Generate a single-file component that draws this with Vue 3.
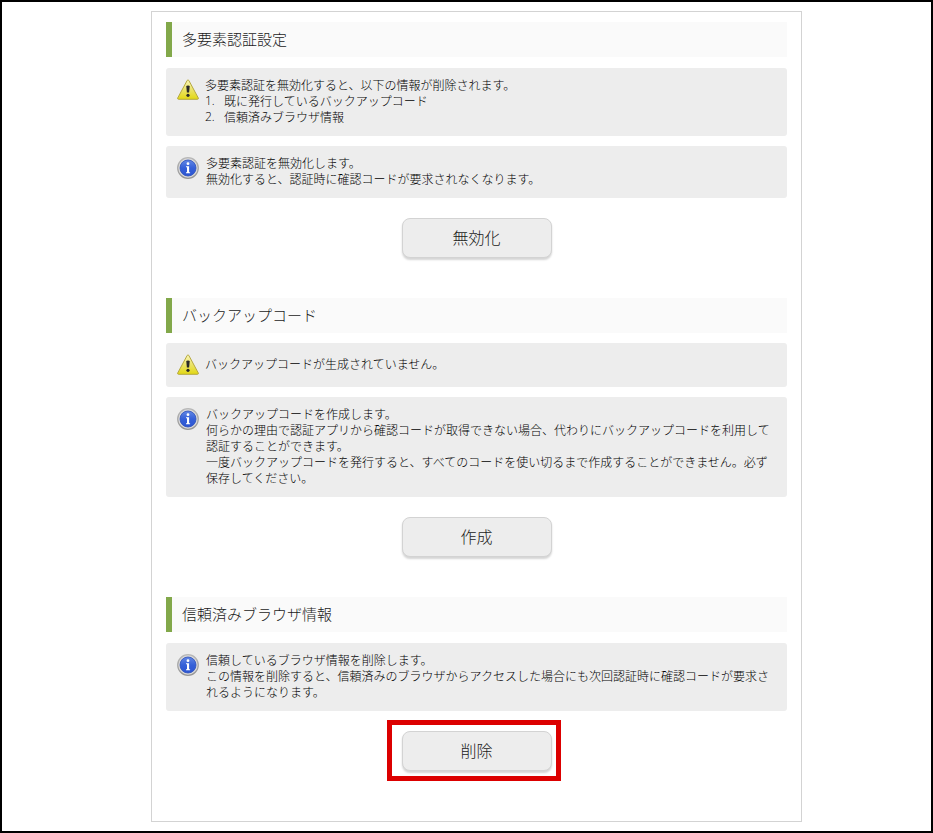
<script setup>
const sections = [
  {
    title: '多要素認証設定',
    boxes: [
      {
        kind: 'warn',
        lines: ['多要素認証を無効化すると、以下の情報が削除されます。'],
        items: ['既に発行しているバックアップコード', '信頼済みブラウザ情報'],
      },
      { kind: 'info', lines: ['多要素認証を無効化します。', '無効化すると、認証時に確認コードが要求されなくなります。'] },
    ],
    action: '無効化',
  },
  {
    title: 'バックアップコード',
    tight: true,
    boxes: [
      { kind: 'warn', single: true, lines: ['バックアップコードが生成されていません。'] },
      {
        kind: 'info',
        lines: [
          'バックアップコードを作成します。',
          '何らかの理由で認証アプリから確認コードが取得できない場合、代わりにバックアップコードを利用して認証することができます。',
          '一度バックアップコードを発行すると、すべてのコードを使い切るまで作成することができません。必ず保存してください。',
        ],
      },
    ],
    action: '作成',
  },
  {
    title: '信頼済みブラウザ情報',
    boxes: [
      {
        kind: 'info',
        lines: [
          '信頼しているブラウザ情報を削除します。',
          'この情報を削除すると、信頼済みのブラウザからアクセスした場合にも次回認証時に確認コードが要求されるようになります。',
        ],
      },
    ],
    action: '削除',
    marked: true,
  },
]
</script>

<template>
  <div class="page">
    <svg class="defs" aria-hidden="true">
      <defs>
        <linearGradient id="warnFill" x1="0" y1="0" x2="0" y2="1">
          <stop offset="0" stop-color="#fbf7b8" />
          <stop offset="0.5" stop-color="#ebe36a" />
          <stop offset="1" stop-color="#e2d812" />
        </linearGradient>
        <linearGradient id="ringFill" x1="0" y1="0" x2="0" y2="1">
          <stop offset="0" stop-color="#b8b8b8" />
          <stop offset="1" stop-color="#959595" />
        </linearGradient>
        <linearGradient id="infoFill" x1="0" y1="0" x2="0" y2="1">
          <stop offset="0" stop-color="#6287e4" />
          <stop offset="0.5" stop-color="#3560d8" />
          <stop offset="1" stop-color="#2c55d2" />
        </linearGradient>
      </defs>
    </svg>
    <main class="card">
      <section v-for="s in sections" :key="s.title" class="section" :class="{ tight: s.tight }">
        <h2 class="title">{{ s.title }}</h2>
        <div class="boxes">
          <div v-for="(b, i) in s.boxes" :key="i" class="box" :class="[b.kind, { single: b.single }]">
            <svg v-if="b.kind === 'warn'" class="icon" viewBox="0 0 22 22">
              <path d="M10.2 2.4 Q11 1.2 11.8 2.4 L21.3 20 Q21.6 21.3 20.6 21.3 H1.4 Q.4 21.3 .7 20Z" fill="url(#warnFill)" stroke="#b5a840" stroke-width="1" stroke-linejoin="round" />
              <path d="M9.3 8.6 Q9.3 7.6 11 7.6 T12.7 8.6 L12.1 14.6 H9.9Z" fill="#292929" />
              <circle cx="11" cy="17.3" r="1.6" fill="#292929" />
            </svg>
            <svg v-else class="icon" viewBox="0 0 22 22">
              <circle cx="11" cy="11" r="10.3" fill="#d8d8d8" stroke="url(#ringFill)" stroke-width="1.2" />
              <circle cx="11" cy="11" r="8" fill="url(#infoFill)" stroke="#2d50bd" stroke-width=".8" />
              <circle cx="11" cy="6.7" r="1.4" fill="#fff" />
              <path d="M9 9.2H12.1V15.2H13.1V16.2H9V15.2H10V10.2H9Z" fill="#fff" />
            </svg>
            <div class="text">
              <p v-for="l in b.lines" :key="l">{{ l }}</p>
              <p v-for="(t, n) in b.items" :key="t" class="item"><span class="num">{{ n + 1 }}.</span>{{ t }}</p>
            </div>
          </div>
        </div>
        <div class="action">
          <div class="frame" :class="{ marked: s.marked }">
            <button class="btn" type="button">{{ s.action }}</button>
          </div>
        </div>
      </section>
    </main>
  </div>
</template>

<style>
body {
  background: #fff;
}
</style>

<style scoped>
.page {
  box-sizing: border-box;
  width: 933px;
  height: 833px;
  border: 2px solid #000;
  padding: 9px 0 0 149px;
  font-family: 'Noto Sans CJK JP', sans-serif;
  font-weight: 300;
  color: #1a1a1a;
  overflow: hidden;
}
.defs {
  display: block;
  width: 0;
  height: 0;
}
.card {
  box-sizing: border-box;
  width: 651px;
  height: 811px;
  border: 1px solid #d3d3d3;
  padding: 10px 14px 0;
}
.section {
  display: flex;
  flex-direction: column;
  height: 276px;
}
.section.tight {
  height: 299px;
}
.title {
  box-sizing: border-box;
  height: 35px;
  margin: 0 0 11px;
  padding-left: 10px;
  border-left: 6px solid #82a84a;
  background: #fafafa;
  font-size: 15px;
  font-weight: 300;
  line-height: 33px;
}
.tight .title {
  margin-bottom: 10px;
}
.boxes {
  display: flex;
  flex-direction: column;
  gap: 10px;
}
.box {
  display: flex;
  align-items: flex-start;
  padding: 9px 11px 11px;
  border-radius: 3px;
  background: #ededed;
  font-size: 12px;
  line-height: 16px;
  color: #000;
}
.box.single {
  padding: 13px 11px 15px;
}
.icon {
  flex: none;
  width: 22px;
  height: 22px;
  margin-top: 2px;
}
.warn .icon {
  margin-top: 1px;
}
.single .icon {
  margin: -3px 0;
}
.text {
  flex: 1;
  margin-left: 7px;
}
.warn .text {
  margin-left: 6px;
}
p {
  margin: 0;
  line-break: anywhere;
}
.item {
  display: flex;
}
.num {
  width: 19px;
  font-family: 'Open Sans', sans-serif;
  font-weight: 300;
}
.action {
  display: flex;
  justify-content: center;
  margin-top: 9px;
}
.frame {
  padding: 6px 4px;
  border: 5px solid transparent;
}
.frame.marked {
  box-sizing: border-box;
  width: 174px;
  height: 61px;
  margin-right: 6px;
  padding: 6px 4px 5px 10px;
  border-color: #dc0000;
}
.btn {
  box-sizing: border-box;
  display: block;
  width: 150px;
  height: 40px;
  padding: 0 0 2px;
  border: 1px solid #d3d3d3;
  border-radius: 8px;
  background: #ededed;
  box-shadow: 0 2px 2px rgba(0, 0, 0, 0.17);
  font-family: inherit;
  font-size: 16px;
  font-weight: 300;
  line-height: 36px;
  color: #1a1a1a;
}
</style>
